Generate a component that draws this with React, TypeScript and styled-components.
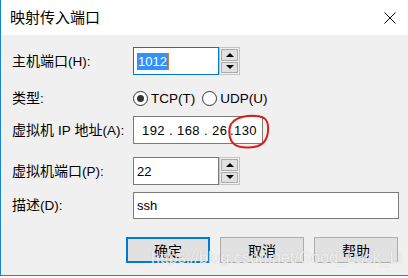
import React from 'react';
import styled, { createGlobalStyle } from 'styled-components';

const uiFont = `"Liberation Sans", "Noto Sans CJK SC", sans-serif`;
const winBlue = '#1883d7';
const focusBlue = '#0078d7';

const GlobalStyle = createGlobalStyle`
  html, body {
    margin: 0;
    padding: 0;
    background: #ffffff;
    font-family: ${uiFont};
  }
`;

const Window = styled.div`
  position: relative;
  width: 408px;
  height: 276px;
  box-sizing: border-box;
  border-left: 1px solid ${winBlue};
  border-bottom: 1px solid ${winBlue};
  display: flex;
  flex-direction: column;
  overflow: hidden;
`;

const TitleBar = styled.div`
  height: 35px;
  flex-shrink: 0;
  background: #ffffff;
  display: flex;
  align-items: center;
  justify-content: space-between;
  padding: 0 12px 0 9px;
`;

const Title = styled.div`
  font-size: 15px;
  color: #000;
  line-height: 1;
`;

const CloseIcon = styled.svg`
  width: 12px;
  height: 12px;
  display: block;
`;

const Body = styled.div`
  flex: 1;
  background: #f0f0f0;
  padding: 12px 10px 0 11px;
  display: flex;
  flex-direction: column;
`;

const FormRow = styled.div<{ $h: number; $mt?: number }>`
  display: grid;
  grid-template-columns: 121px 1fr;
  align-items: center;
  height: ${({ $h }) => $h}px;
  margin-top: ${({ $mt }) => $mt || 0}px;
`;

const Label = styled.div`
  font-size: 14px;
  color: #000;
  white-space: nowrap;
  line-height: 1;
`;

const Latin = styled.span`
  font-size: 13.5px;
`;

const SpinWrap = styled.div`
  display: flex;
  height: 28px;
`;

const InputBox = styled.div<{ $w: number; $focused?: boolean }>`
  width: ${({ $w }) => $w}px;
  height: 100%;
  box-sizing: border-box;
  background: #ffffff;
  border: 1px solid ${({ $focused }) => ($focused ? focusBlue : '#7a7a7a')};
  display: flex;
  align-items: center;
  padding-left: 3px;
  font-size: 13px;
  color: #000;
`;

const Selected = styled.span`
  background: #3390ff;
  color: #ffffff;
  padding: 1px 1px;
  line-height: 15px;
  border-right: 1px solid #d0802a;
`;

const SpinButtons = styled.div`
  width: 21px;
  height: 100%;
  box-sizing: border-box;
  border: 1px solid #c4c4c4;
  background: #f0f0f0;
  padding: 1px;
  display: flex;
  flex-direction: column;
  gap: 1px;
`;

const SpinBtn = styled.div`
  flex: 1;
  background: #e1e1e1;
  border: 1px solid #adadad;
  display: flex;
  align-items: center;
  justify-content: center;
`;

const Arrow = styled.div<{ $down?: boolean }>`
  width: 0;
  height: 0;
  border-left: 4px solid transparent;
  border-right: 4px solid transparent;
  ${({ $down }) => ($down ? 'border-top: 4px solid #000;' : 'border-bottom: 4px solid #000;')}
`;

const RadioGroup = styled.div`
  display: flex;
  align-items: center;
  gap: 7px;
  font-size: 13.5px;
`;

const RadioItem = styled.label`
  display: flex;
  align-items: center;
  gap: 3px;
  color: #000;
`;

const RadioCircle = styled.span<{ $checked?: boolean }>`
  width: 15px;
  height: 15px;
  box-sizing: border-box;
  border-radius: 50%;
  border: 1px solid #333333;
  background: #ffffff;
  display: flex;
  align-items: center;
  justify-content: center;
  &::after {
    content: '';
    width: 7px;
    height: 7px;
    border-radius: 50%;
    background: ${({ $checked }) => ($checked ? '#333333' : 'transparent')};
  }
`;

const IpBox = styled.div`
  position: relative;
  width: 130px;
  height: 28px;
  box-sizing: border-box;
  background: #ffffff;
  border: 1px solid #7a7a7a;
  display: flex;
  align-items: center;
  padding-left: 8px;
  font-size: 13px;
  color: #000;
`;

const Octet = styled.span<{ $w: number }>`
  width: ${({ $w }) => $w}px;
  letter-spacing: 0.4px;
`;

const Dot = styled.span<{ $w: number }>`
  width: ${({ $w }) => $w}px;
  text-align: left;
`;

const RedMark = styled.svg`
  position: absolute;
  left: 92px;
  top: -3px;
  width: 44px;
  height: 36px;
  overflow: visible;
`;

const ButtonRow = styled.div`
  display: flex;
  justify-content: flex-end;
  gap: 10px;
  margin-top: 18px;
`;

const Button = styled.div<{ $default?: boolean }>`
  width: 84px;
  height: 26px;
  box-sizing: border-box;
  background: #e1e1e1;
  border: ${({ $default }) => ($default ? `2px solid ${focusBlue}` : '1px solid #adadad')};
  display: flex;
  align-items: center;
  justify-content: center;
  font-size: 14px;
  color: #000;
`;

const Watermark = styled.div`
  position: absolute;
  left: 150px;
  top: 249px;
  font-family: "Liberation Sans", sans-serif;
  font-size: 16px;
  color: rgba(255, 255, 255, 0.8);
  text-shadow: 0 0 1px rgba(120, 120, 120, 0.45);
  white-space: nowrap;
  pointer-events: none;
`;

function Spin({ value, focused }: { value: React.ReactNode; focused?: boolean }) {
  return (
    <SpinWrap>
      <InputBox $w={86} $focused={focused}>{value}</InputBox>
      <SpinButtons>
        <SpinBtn><Arrow /></SpinBtn>
        <SpinBtn><Arrow $down /></SpinBtn>
      </SpinButtons>
    </SpinWrap>
  );
}

export default function App() {
  return (
    <>
      <GlobalStyle />
      <Window>
        <TitleBar>
          <Title>映射传入端口</Title>
          <CloseIcon viewBox="0 0 12 12">
            <path d="M0.5 0.5 L11.5 11.5 M11.5 0.5 L0.5 11.5" stroke="#000" strokeWidth="1" fill="none" />
          </CloseIcon>
        </TitleBar>
        <Body>
          <FormRow $h={28}>
            <Label>主机端口<Latin>(H):</Latin></Label>
            <Spin focused value={<Selected>1012</Selected>} />
          </FormRow>
          <FormRow $h={22} $mt={12}>
            <Label>类型<Latin>:</Latin></Label>
            <RadioGroup>
              <RadioItem><RadioCircle $checked />TCP(T)</RadioItem>
              <RadioItem><RadioCircle />UDP(U)</RadioItem>
            </RadioGroup>
          </FormRow>
          <FormRow $h={28} $mt={7}>
            <Label>虚拟机 <Latin>IP</Latin> 地址<Latin>(A):</Latin></Label>
            <IpBox>
              <Octet $w={27}>192</Octet><Dot $w={8}>.</Dot>
              <Octet $w={27}>168</Octet><Dot $w={8}>.</Dot>
              <Octet $w={18}>26</Octet><Dot $w={4}>.</Dot>
              <Octet $w={24}>130</Octet>
              <RedMark viewBox="0 0 44 36">
                <path
                  d="M6 9 C 12 1, 30 0, 38 4 C 44 8, 43 22, 38 28 C 32 35, 14 35, 8 30 C 3 26, 2 16, 5 10"
                  stroke="#e01b1b"
                  strokeWidth="2"
                  fill="none"
                  strokeLinecap="round"
                />
              </RedMark>
            </IpBox>
          </FormRow>
          <FormRow $h={28} $mt={13}>
            <Label>虚拟机端口<Latin>(P):</Latin></Label>
            <Spin value="22" />
          </FormRow>
          <FormRow $h={27} $mt={7}>
            <Label>描述<Latin>(D):</Latin></Label>
            <InputBox $w={266}>ssh</InputBox>
          </FormRow>
          <ButtonRow>
            <Button $default>确定</Button>
            <Button>取消</Button>
            <Button>帮助</Button>
          </ButtonRow>
        </Body>
        <Watermark>https://blog.csdn.net/Good_Luck_Li</Watermark>
      </Window>
    </>
  );
}
